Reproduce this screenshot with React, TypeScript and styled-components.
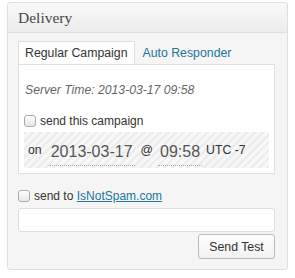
import React from "react";
import styled, { createGlobalStyle } from "styled-components";

const Global = createGlobalStyle`
  html, body { margin: 0; padding: 0; background: #ffffff; }
  body { font-family: "Liberation Sans", Arial, sans-serif; font-size: 12px; color: #333; }
`;

const Panel = styled.div`
  box-sizing: border-box;
  width: 281px;
  margin: 2px 0 0 7px;
  border: 1px solid #dfdfdf;
  border-radius: 3px;
  background: #f5f5f5;
  padding-bottom: 10px;
`;

const Header = styled.div`
  height: 29px;
  border-bottom: 1px solid #dfdfdf;
  background: linear-gradient(to bottom, #f9f9f9, #ececec);
  border-radius: 3px 3px 0 0;
  padding-left: 10px;
  display: flex;
  align-items: center;
  font-family: "Liberation Serif", Georgia, serif;
  font-size: 15.5px;
  color: #464646;
`;

const Inner = styled.div`
  padding: 9px 12px 0 10px;
`;

const TabRow = styled.div`
  display: flex;
  align-items: flex-end;
  height: 22px;
`;

const Tab = styled.div<{ $active?: boolean }>`
  box-sizing: border-box;
  height: 23px;
  padding: 0 6px;
  line-height: 22px;
  font-size: 12.3px;
  color: ${(p) => (p.$active ? "#333" : "#21759b")};
  background: ${(p) => (p.$active ? "#fff" : "transparent")};
  border: 1px solid ${(p) => (p.$active ? "#dfdfdf" : "transparent")};
  border-bottom: none;
  position: relative;
  z-index: 1;
  margin-right: 1px;
`;

const Content = styled.div`
  box-sizing: border-box;
  background: #fff;
  border: 1px solid #dfdfdf;
  padding: 17px 5px 5px 5px;
`;

const ServerTime = styled.div`
  font-style: italic;
  font-size: 12.2px;
  color: #666;
  padding-left: 1px;
  line-height: 16px;
`;

const CheckRow = styled.label<{ $top: number }>`
  display: flex;
  align-items: center;
  gap: 4px;
  margin-top: ${(p) => p.$top}px;
  font-size: 12px;
  color: #333;
  line-height: 16px;
`;

const Check = styled.span`
  box-sizing: border-box;
  width: 12px;
  height: 12px;
  border: 1px solid #a9a9a9;
  border-radius: 3px;
  background: linear-gradient(to bottom, #fdfdfd, #e6e6e6);
  box-shadow: inset 0 1px 0 #fff;
  flex: none;
`;

const Schedule = styled.div`
  margin-top: 3px;
  height: 36px;
  display: flex;
  align-items: center;
  padding-left: 4px;
  background: repeating-linear-gradient(135deg, #ededed 0 2.5px, #f8f8f8 2.5px 5.6px);
  color: #333;
`;

const Small = styled.span<{ $ml: number }>`
  font-size: 12.3px;
  margin-left: ${(p) => p.$ml}px;
`;

const Field = styled.span<{ $ml: number }>`
  font-size: 16px;
  color: #555;
  margin-left: ${(p) => p.$ml}px;
  padding: 2px 2px 3px 2px;
  border-bottom: 1px dotted #aaa;
  line-height: 20px;
  margin-top: 6px;
`;

const Link = styled.a`
  color: #21759b;
  text-decoration: underline;
`;

const TextInput = styled.input`
  box-sizing: border-box;
  display: block;
  width: 100%;
  height: 24px;
  margin-top: 4px;
  border: 1px solid #dfdfdf;
  border-radius: 3px;
  background: #fff;
  outline: none;
`;

const Actions = styled.div`
  display: flex;
  justify-content: flex-end;
  margin-top: 2px;
`;

const Button = styled.button`
  box-sizing: border-box;
  width: 77px;
  height: 25px;
  border: 1px solid #bbb;
  border-radius: 3px;
  background: linear-gradient(to bottom, #fefefe, #f1f1f1);
  font-family: "Liberation Sans", Arial, sans-serif;
  font-size: 12.3px;
  color: #333;
  padding: 0;
`;

export default function App() {
  return (
    <>
      <Global />
      <Panel>
        <Header>Delivery</Header>
        <Inner>
          <TabRow>
            <Tab $active>Regular Campaign</Tab>
            <Tab>Auto Responder</Tab>
          </TabRow>
          <Content>
            <ServerTime>Server Time: 2013-03-17 09:58</ServerTime>
            <CheckRow $top={15}>
              <Check />
              send this campaign
            </CheckRow>
            <Schedule>
              <Small $ml={0}>on</Small>
              <Field $ml={7}>2013-03-17</Field>
              <Small $ml={6}>@</Small>
              <Field $ml={5}>09:58</Field>
              <Small $ml={4}>UTC -7</Small>
            </Schedule>
          </Content>
          <CheckRow $top={14}>
            <Check />
            <span>
              send to <Link href="#">IsNotSpam.com</Link>
            </span>
          </CheckRow>
          <TextInput type="text" />
          <Actions>
            <Button>Send Test</Button>
          </Actions>
        </Inner>
      </Panel>
    </>
  );
}
